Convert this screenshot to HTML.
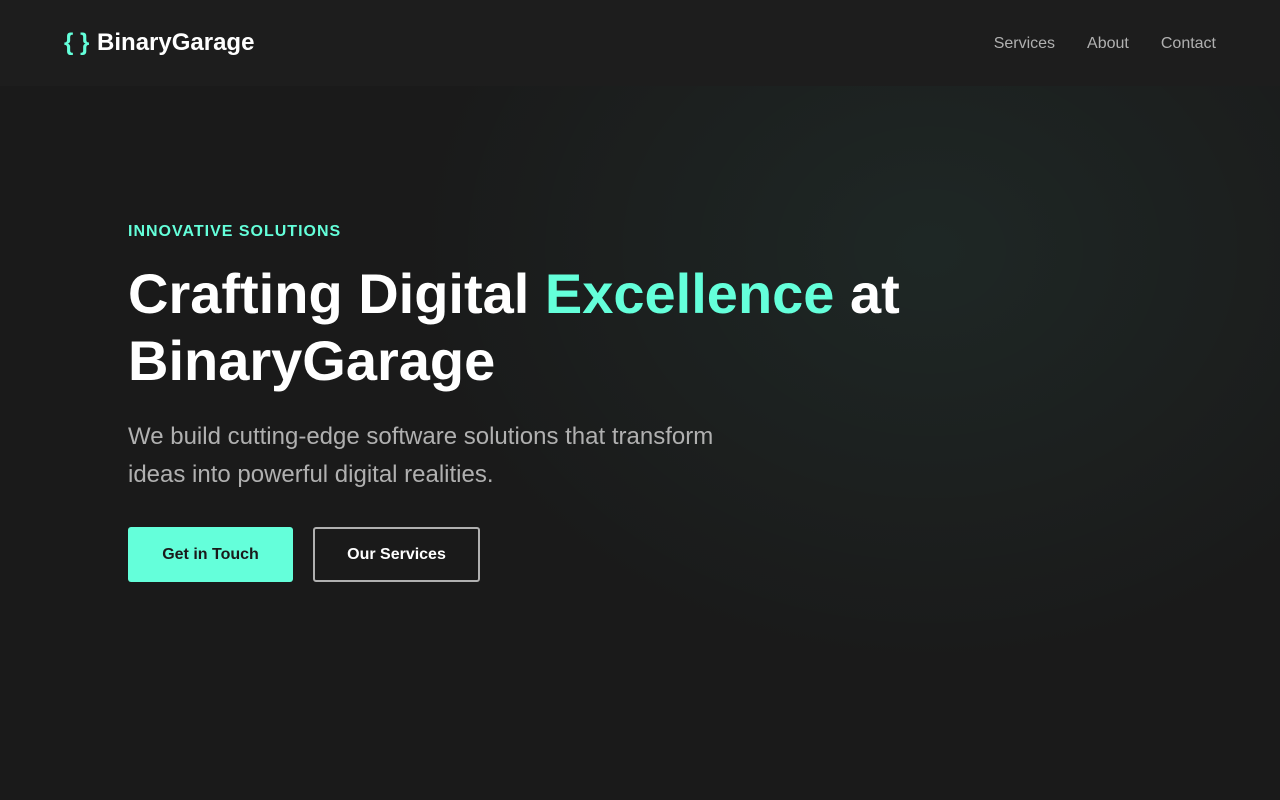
<!DOCTYPE html>
<html><head><style>
*{margin:0;padding:0;box-sizing:border-box}
body{width:1280px;height:800px;overflow:hidden;background:#1a1a1a;font-family:"Liberation Sans",sans-serif;position:relative}
.bg{position:absolute;inset:0;background:radial-gradient(ellipse 520px 420px at 930px 250px,rgba(100,255,218,0.06),rgba(100,255,218,0) 100%)}
header{position:absolute;top:0;left:0;width:1280px;height:86px;background:rgba(30,30,30,0.95);}
.logo{position:absolute;left:64px;top:29px;font-size:24px;font-weight:bold;color:#fff}
.logo span{color:#64ffda}
.logo b{margin-left:1px}
nav{position:absolute;right:64px;top:35px;font-size:16px;color:#b0b0b0}
nav a{margin-left:32px}
.tag{position:absolute;left:128px;top:223px;color:#64ffda;font-size:16px;font-weight:bold;letter-spacing:1px}
h1{position:absolute;left:128px;top:260px;font-size:56px;line-height:67px;color:#fff;font-weight:bold;width:900px}
h1 span{color:#64ffda}
p{position:absolute;left:128px;top:418px;font-size:24px;line-height:38px;color:#b0b0b0;width:620px}
.b{position:absolute;top:527px;height:55px;font-size:16px;font-weight:bold;display:flex;align-items:center;justify-content:center;border-radius:3px;padding-top:1px}
.b1{left:128px;width:165px;background:#64ffda;color:#1a1a1a}
.b2{left:313px;width:167px;border:2px solid #b0b0b0;color:#fff}
</style></head><body>
<div class="bg"></div>
<header><div class="logo"><span>{ }</span> <b>BinaryGarage</b></div>
<nav><a>Services</a><a>About</a><a>Contact</a></nav></header>
<div class="tag">INNOVATIVE SOLUTIONS</div>
<h1>Crafting Digital <span>Excellence</span> at BinaryGarage</h1>
<p>We build cutting-edge software solutions that transform ideas into powerful digital realities.</p>
<div class="b b1">Get in Touch</div>
<div class="b b2">Our Services</div>
</body></html>
